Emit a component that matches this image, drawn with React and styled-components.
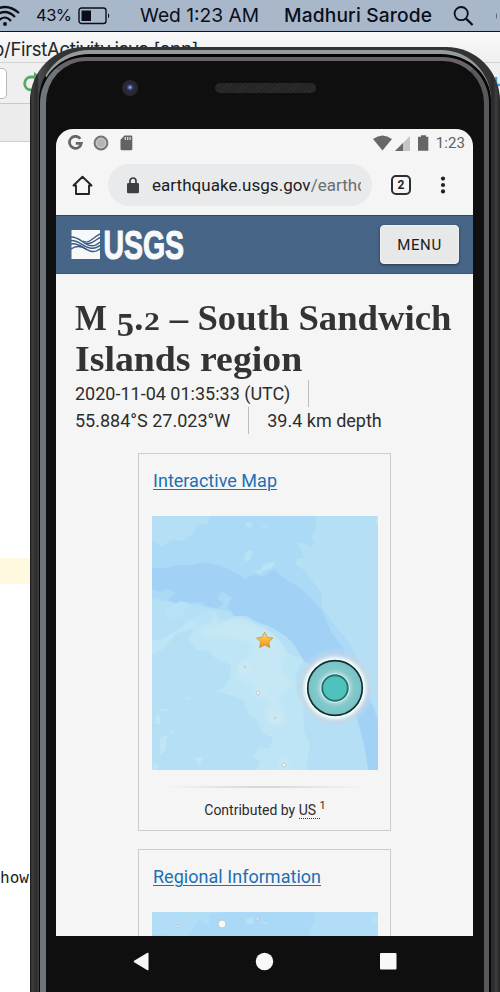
import React from "react";
import styled, { createGlobalStyle } from "styled-components";

const Global = createGlobalStyle`
  * { box-sizing: border-box; }
  html, body { margin: 0; padding: 0; overflow: hidden; }
  svg { display: block; flex: none; }
`;

/* ---------- desktop ---------- */
const Desktop = styled.div`
  position: relative;
  width: 500px;
  height: 992px;
  overflow: hidden;
  background: #fff;
  font-family: Roboto, sans-serif;
`;
const MenuBar = styled.header`
  display: flex;
  align-items: center;
  height: 32px;
  background: #a9b7cb;
  border-bottom: 1px solid #10131a;
  font-family: Inter, sans-serif;
  color: #0b0e18;
`;
const MenuText = styled.span`
  width: ${(p) => p.$w}px;
  margin-right: ${(p) => p.$gap}px;
  font-size: ${(p) => p.$size}px;
  font-weight: ${(p) => p.$weight || 400};
  letter-spacing: ${(p) => p.$track || 0}px;
  line-height: 31px;
  white-space: nowrap;
`;
const WifiSlot = styled.div`
  width: 20px;
  margin: -2px 16px 0 0;
`;
const BatterySlot = styled.div`
  width: 33px;
  margin-right: 29px;
`;
const TitleRow = styled.div`
  height: 31px;
  padding-top: 5px;
  background: linear-gradient(#f9f9f9, #efefef);
  border-bottom: 1px solid #d2d2d2;
  font: 18.5px/24px Inter, sans-serif;
  letter-spacing: -0.3px;
  color: #262626;
  white-space: nowrap;
  text-indent: -7px;
`;
const ToolRow = styled.div`
  display: flex;
  align-items: center;
  justify-content: space-between;
  height: 41px;
  background: #efefef;
  border-bottom: 1px solid #c9c9c9;
`;
const ToolGroup = styled.div`
  display: flex;
  align-items: center;
  gap: 15px;
`;
const ToolField = styled.div`
  width: 7px;
  height: 31px;
  background: #fff;
  border: 1px solid #b6b6b6;
  border-left: 0;
  border-radius: 0 5px 5px 0;
`;
const TabStrip = styled.div`
  height: 38px;
  background: #ececec;
  border-bottom: 1px solid #cfcfcf;
`;
const Editor = styled.div`
  padding-top: 416px;
  background: #fff;
`;
const ActiveLine = styled.div`
  height: 26px;
  margin-bottom: 281px;
  background: #fff9df;
`;
const CodeLine = styled.div`
  font: 16px/26px "DejaVu Sans Mono", monospace;
  color: #1c1c1c;
`;

/* ---------- phone body ---------- */
const Phone = styled.div`
  position: absolute;
  left: 30px;
  top: 47px;
  width: 470px;
  height: 960px;
  padding: 3px 9px 0 9px;
  border-radius: 54px 54px 0 0;
  background: linear-gradient(90deg, #151515 0, #3e3e3e 2px, #333 5px, #2a2a2a 7px, #4b4b4b 9px, #333 20px, #333 460px, #292929 463px, #3e3e3e 466px, #242424 470px);
`;
const Glint = styled.div`
  height: 100%;
  padding: 3px 2px 0 0;
  border-top: 4px solid #969c9c;
  border-left: 1px solid #080808;
  border-radius: 50px 50px 0 0;
  background: #050505;
`;
const Rim = styled.div`
  height: 100%;
  border-top: 4px solid #68636a;
  border-left: 6px solid #70757d;
  border-right: 5px solid #59585d;
  border-radius: 46px 46px 0 0;
  background: #0f0f0f;
  padding: 0 11px 0 10px;
`;
const Forehead = styled.div`
  display: flex;
  align-items: center;
  height: 68px;
  padding: 0 0 14px 66px;
`;
const Camera = styled.div`
  width: 16px;
  height: 16px;
  border: 4px solid #29292b;
  border-radius: 50%;
  background: radial-gradient(circle at 50% 42%, #93a0d8 0 12%, #3b4882 35%, #1d2240 75%);
`;
const Speaker = styled.div`
  width: 101px;
  height: 10px;
  margin-left: 77px;
  border-radius: 5px;
  background: repeating-linear-gradient(135deg, #2b2d2c 0 1px, #242625 1px 3px);
`;
const Screen = styled.main`
  width: 417px;
  height: 807px;
  overflow: hidden;
  border-radius: 17px 17px 0 0;
  background: #f5f5f5;
`;
const NavBar = styled.nav`
  display: flex;
  align-items: center;
  height: 50px;
  padding-left: 77px;
`;
const NavSlot = styled.div`
  width: ${(p) => p.$w}px;
`;

/* ---------- browser ---------- */
const StatusBar = styled.div`
  display: flex;
  align-items: center;
  justify-content: space-between;
  height: 28px;
  padding: 0 8px 0 12px;
`;
const StatusGroup = styled.div`
  display: flex;
  align-items: center;
  gap: ${(p) => p.$gap}px;
  color: #606060;
`;
const Clock = styled.span`
  margin-left: 0;
  font-size: 15px;
  line-height: 20px;
  letter-spacing: 0.1px;
`;
const AddressRow = styled.div`
  display: flex;
  align-items: center;
  height: 58px;
  padding: 0 0 2px 16px;
`;
const Pill = styled.div`
  display: flex;
  align-items: center;
  width: 264px;
  height: 42px;
  margin: 0 19px 0 15px;
  padding: 0 10px 0 19px;
  border-radius: 21px;
  background: #e8eaeb;
`;
const Url = styled.span`
  width: 209px;
  margin-left: 13px;
  overflow: hidden;
  white-space: nowrap;
  font-size: 17px;
  line-height: 24px;
  letter-spacing: 0.04px;
  color: #202124;
`;
const UrlPath = styled.span`
  color: #6b6e71;
`;
const TabCount = styled.div`
  display: grid;
  place-items: center;
  width: 20px;
  height: 20px;
  margin-right: 29px;
  border: 2px solid #2a2d34;
  border-radius: 5px;
  font-size: 12px;
  font-weight: 700;
  line-height: 14px;
  color: #202124;
`;
const SiteHeader = styled.div`
  display: flex;
  align-items: center;
  justify-content: space-between;
  height: 59px;
  padding: 0 14px 0 15px;
  border-top: 1px solid #17516b;
  border-bottom: 1px solid #2f5a85;
  background: #476586;
`;
const MenuButton = styled.button`
  width: 79px;
  height: 39px;
  padding: 0;
  border: 1px solid #f1f1f1;
  border-radius: 4px;
  background: #e8e8e8;
  box-shadow: 0 1px 3px rgba(0, 0, 0, 0.45);
  font: 400 15px/36px Roboto, sans-serif;
  letter-spacing: 0.6px;
  color: #1c1c1c;
`;

/* ---------- article ---------- */
const Article = styled.article`
  padding: 24px 0 0 19px;
`;
const Title = styled.h1`
  margin: 0;
  font: 700 36px/41px "Liberation Serif", serif;
  color: #333;
`;
const TitleLine = styled.span`
  display: block;
  width: max-content;
  height: 41px;
  white-space: nowrap;
  transform: scaleX(${(p) => p.$fit});
  transform-origin: 0 50%;
`;
const Capital = styled.span`
  display: inline-block;
  margin-right: -2px;
  transform: scaleX(0.92);
  transform-origin: 0 50%;
`;
const OldFigure = styled.span`
  display: inline-block;
  font-size: ${(p) => p.$size}px;
  line-height: 20px;
  transform: translateY(${(p) => p.$drop || 0}px) scaleX(${(p) => p.$stretch || 1});
  margin: 0 ${(p) => p.$side || 0}px;
`;
const FactLine = styled.div`
  display: flex;
  align-items: center;
  height: 27px;
  font-size: 18px;
  line-height: 27px;
  white-space: nowrap;
  color: #2d2d2d;
`;
const Divider = styled.i`
  width: 1px;
  height: 27px;
  margin: 0 18px;
  background: #bdbdbd;
`;
const Card = styled.section`
  width: 253px;
  height: 378px;
  margin: ${(p) => p.$top}px 0 0 63px;
  padding: 13px 12px 0 13px;
  border: 1px solid #cdcdcd;
`;
const CardLink = styled.a`
  display: block;
  width: max-content;
  height: 49px;
  padding-left: 1px;
  font-size: 18px;
  line-height: 27px;
  letter-spacing: ${(p) => p.$track}px;
  color: #1c70b4;
  text-decoration: underline;
  text-decoration-thickness: 1px;
  text-underline-offset: 2px;
`;
const Rule = styled.div`
  height: 2px;
  margin: 16px 13px 0;
  background: linear-gradient(90deg, transparent, #d6d6d6 50%, transparent);
`;
const Credit = styled.p`
  margin: 9px 0 0;
  text-align: center;
  font-size: 14px;
  line-height: 26px;
  color: #2c2c2c;
`;
const Abbr = styled.abbr`
  text-decoration: none;
  border-bottom: 1px dotted #333;
`;
const Sup = styled.sup`
  font-size: 11px;
  line-height: 0;
  vertical-align: 6px;
`;

const MenuWifi = () => (
  <svg width="20" height="22" viewBox="0 0 20 22" fill="none" stroke="#0b0e18" strokeWidth="2.2">
    <path d="M-9 9Q5-3 19 9M-6 13Q5 3 15 13M-2 17Q5 10 11 17" />
    <circle cx="5" cy="20" r="2" fill="#0b0e18" stroke="none" />
  </svg>
);

const MenuBattery = () => (
  <svg width="33" height="18" viewBox="0 0 33 18">
    <rect x="1" y="1" width="27" height="15.5" rx="2.5" fill="none" stroke="#0b0e18" strokeWidth="1.4" />
    <rect x="3.5" y="3.5" width="9.5" height="10.5" fill="#0b0e18" />
    <path d="M30 6q2.5 2.8 0 5.6z" fill="#0b0e18" />
  </svg>
);

const SearchGlyph = () => (
  <svg width="22" height="22" viewBox="0 0 22 22" fill="none" stroke="#0b0e18">
    <circle cx="8.2" cy="8.6" r="6.6" strokeWidth="1.8" />
    <path d="M13 13.600L19.600 20" strokeWidth="2.2" />
  </svg>
);

const Brand = () => (
  <svg width="115" height="32" viewBox="0 0 115 32">
    <rect x="0.5" y="1" width="28.5" height="29" fill="#f7f8f9" />
    <g fill="none" stroke="#3a5d84" strokeWidth="1.4">
      <path d="M0 8C7 8 10 12 15 15S24 18 29 13" />
      <path d="M0 11.500C8 11 12 18 19 19S26 18 29 16.500" />
      <path d="M0 15C8 13 12 20 19 22S26 21 29 20" />
      <path d="M12 12C18 16 22 8 29 5" />
      <path d="M15 14.500C21 16 24 11 29 8.500" />
      <path d="M0 20C6 16 11 17 16 20.500" />
    </g>
    <text x="32.5" y="29.6" textLength="80.5" lengthAdjust="spacingAndGlyphs" fontFamily="'Liberation Sans Narrow','Liberation Sans',sans-serif" fontWeight="700" fontSize="40" fill="#f8f9fa" stroke="#f8f9fa" strokeWidth="1.2">USGS</text>
  </svg>
);

const SeaMap = () => (
  <svg width="226" height="254" viewBox="0 0 226 254">
    <defs>
      <radialGradient id="halo"><stop offset=".72" stopColor="#f8ffff" stopOpacity=".95" /><stop offset=".84" stopColor="#c9d6e2" stopOpacity=".7" /><stop offset="1" stopColor="#c5d9ea" stopOpacity="0" /></radialGradient>
      <radialGradient id="lens"><stop offset=".5" stopColor="#b5dfe2" /><stop offset=".68" stopColor="#84c9cc" /><stop offset="1" stopColor="#75c2c5" /></radialGradient>
      <linearGradient id="gold" x2="0" y2="1"><stop stopColor="#ffe36b" /><stop offset="1" stopColor="#f68a12" /></linearGradient>
      <filter id="soften"><feGaussianBlur stdDeviation=".6" /></filter>
      <filter id="mist"><feGaussianBlur stdDeviation="2" /></filter>
    </defs>
    <rect width="226" height="254" fill="#b4dff5" />
    <g filter="url(#soften)">
      <path fill="#abdaf6" d="M58-3L56 8 45 9 42 17 32 25 20 24 10 30 0 25-3 25V82L20 86 50 90 95 99 135 119 160 149 190 165 211 220 218 257H229V207L220 187 211 155 197 127 181 107 170 91V78L158 62 153 55 143 48 145 43 152 42 149 35 145 27 151 27 159 31 162 27 159 20 164 14V-3z" />
      <path fill="#a1d2f6" d="M-3 52H15L26 49 40 49 55 46 75 52 86 58 93 63 101 59 111 60 122 53 132 62 148 72 161 84 170 95 180 117 191 132 200 151 213 159 217 181 226 202 229 210V257H217L212 229 205 201 199 175 184 163 167 154 152 145 141 127 132 119 117 110 102 105 95 100 82 100 75 90 80 82 70 75 65 82 72 88 65 92 56 91 48 86 24 88 16 83 24 77 15 73 9 76 0 73-3 73z" />
      <path fill="#bee5f5" d="M-3 126L10 123 27 113 36 105 48 99 62 94 68 105 89 101 102 108 115 114 128 125 137 138 151 143 144 158 145 177 151 185 152 216 158 229 154 254H104L109 246 101 240 107 232 118 232 121 222 110 217 105 204 96 198 92 184 75 178 64 176 72 171 78 162 79 149 63 142 57 135 44 134 37 123 42 112 23 118 13 131 4 137-3 140z" />
      <path filter="url(#mist)" fill="#cbe9f5" opacity=".65" d="M68 109Q77 100 101 108T128 130Q137 135 131 147T141 164Q137 177 132 178T128 190Q136 201 132 210L120 211 112 196 118 187 98 169 84 160 87 146 101 138 100 126 74 122 56 121 49 116 58 109z" />
      <path fill="#b8e2f5" d="M93 38q5-6 8-1l-4 8q-7 1-4-7zM94 7q4-2 7 1l-2 3q-4 1-5-1zM108 10l8-1v3zM111 48l13-3-4 7-12 4zM103 55l9-2-4 5zM144 46l8 2-4 3zM15 92l13-7 9 2-7 14-14 4-3-7zM41 102l12-8 9 1-3 12-15 3z" />
      <path fill="#c0e5f5" d="M8 222l7-4-1 15-6 6zM4 199l4 1v8H4zM18 214h4v4zM42 241l9 1-4 7zM34 181l4 1-4 2zM8 193h7v2H8zM224 3l3-1v8l-3-2zM1 247l7 3-3 4H0z" />
      <path fill="#abd9f6" d="M181 109L197 127 211 155 220 187 229 207V215L215 177 205 155 193 138z" opacity=".6" />
      <g fill="#d0eaf5" opacity=".7" filter="url(#mist)"><ellipse cx="93" cy="151" rx="5" ry="6" /><circle cx="108" cy="177" r="5" /><circle cx="122" cy="202" r="6" /><circle cx="132" cy="247" r="5" /></g>
    </g>
    <g fill="#f5f4ef" stroke="#aab6b9" strokeWidth=".6"><circle cx="93" cy="151" r="1" /><circle cx="106" cy="177" r="1.8" /><circle cx="123" cy="202" r="1" /><circle cx="132" cy="249" r="2" /></g>
    <path d="M112.7 116.2l2.5 5 5.6.9-4 3.9.9 5.6-5-2.6-5 2.6.9-5.6-4-3.9 5.6-.9z" fill="url(#gold)" stroke="#c39246" strokeWidth=".8" />
    <circle cx="183" cy="172" r="40" fill="url(#halo)" />
    <circle cx="183" cy="172" r="29.300" fill="#fff" />
    <circle cx="183" cy="172" r="27.3" fill="url(#lens)" stroke="#102f2f" strokeWidth="1.7" />
    <circle cx="183" cy="172" r="14.6" fill="#e9f6f6" />
    <circle cx="183" cy="172" r="12.8" fill="#50c2bc" stroke="#286f72" strokeWidth="1.9" />
  </svg>
);

const RegionMap = () => (
  <svg width="226" height="254" viewBox="0 0 226 254">
    <rect width="226" height="254" fill="#b1def6" />
    <path fill="#a9d9f6" d="M0 23L35 24 48 8 57 14V2L75 0H164L163 9 157 20 161 30V254H0z" />
    <path fill="#b8e1f5" d="M94 7l7-2v7h-7zM108 9l9 2-3 2zM220 5l6-2v9l-5-2z" />
    <g fill="#f7f7f4" stroke="#aebdc2" strokeWidth=".7"><circle cx="70" cy="12" r="4" /><circle cx="25" cy="14.5" r="1.3" /><circle cx="105.500" cy="7" r="1.3" /></g>
  </svg>
);

export default function App() {
  return (
    <Desktop>
      <Global />
      <MenuBar>
        <WifiSlot><MenuWifi /></WifiSlot>
        <MenuText $size={16.5} $w={35} $gap={7} $track={-0.5}>43%</MenuText>
        <BatterySlot><MenuBattery /></BatterySlot>
        <MenuText $size={19.2} $w={120} $gap={24}>Wed 1:23 AM</MenuText>
        <MenuText $size={19.2} $w={149} $gap={20} $weight={500} $track={0.15}>Madhuri Sarode</MenuText>
        <SearchGlyph />
        <svg width="22" height="22" viewBox="0 0 22 22"><circle cx="32" cy="11" r="9.500" fill="none" stroke="#0b0e18" strokeWidth="2" /></svg>
      </MenuBar>
      <TitleRow>b/FirstActivity.java [app]</TitleRow>
      <ToolRow>
        <ToolGroup>
          <ToolField />
          <svg width="20" height="22" viewBox="0 0 20 22"><path d="M13 5H9a6.500 6.500 0 1 0 6.500 8" fill="none" stroke="#58a968" strokeWidth="2.800" /><path d="M12 0l7 5-7 5z" fill="#58a968" /></svg>
        </ToolGroup>
        <svg width="6" height="16" viewBox="0 0 6 16"><path d="M2 2v11M2 10h4" stroke="#38a6dd" strokeWidth="2.500" /></svg>
      </ToolRow>
      <TabStrip />
      <Editor>
        <ActiveLine />
        <CodeLine>how</CodeLine>
      </Editor>

      <Phone>
        <Glint>
          <Rim>
            <Forehead>
              <Camera />
              <Speaker />
            </Forehead>
            <Screen>
              <StatusBar>
                <StatusGroup $gap={10}>
                  <svg width="15" height="16" viewBox="0 0 15 16" fill="none" stroke="#666" strokeWidth="2.700"><path d="M12.300 3.700A6 6 0 1 0 13.400 8.300H7.800" /></svg>
                  <svg width="16" height="16" viewBox="0 0 16 16"><circle cx="8" cy="8" r="6.400" fill="#c6c6c6" stroke="#757575" strokeWidth="2" /><circle cx="8" cy="8" r="3.800" fill="#b3b3b3" /></svg>
                  <svg width="15" height="16" viewBox="-1 0 15 16"><path d="M4.500.5H11q1.300 0 1.300 1.300V14q0 1.300-1.300 1.300H1.800Q.5 15.300.5 14V4.800z" fill="#626262" /><path d="M5.300 2v3M7.700 2v3M10.100 2v3" stroke="#e7e7e7" strokeWidth="1.200" /></svg>
                </StatusGroup>
                <StatusGroup $gap={3}>
                  <svg width="19" height="16" viewBox="0 0 19 16"><path d="M0 4Q9.500-3 19 4L9.500 15.500z" fill="#686868" /></svg>
                  <svg width="15" height="15" viewBox="0 0 15 15"><path d="M0 15L15 0V15z" fill="#c5c5c5" /><path d="M0 15L8 7V15z" fill="#686868" /></svg>
                  <svg width="20" height="16" viewBox="0 0 20 16"><path d="M8 .3h5v1.500h2.300V15.700H5V1.800H8z" fill="#656565" /></svg>
                  <Clock>1:23</Clock>
                </StatusGroup>
              </StatusBar>
              <AddressRow>
                <svg width="21" height="21" viewBox="0 0 21 21" fill="none" stroke="#202329" strokeWidth="1.900" strokeLinejoin="round"><path d="M1.500 10.500L10.500 1.800l9 8.700H17v8.500H4v-8.500z" /></svg>
                <Pill>
                  <svg width="12" height="17" viewBox="0 0 12 17"><rect y="6" width="12" height="10.200" rx="1.200" fill="#3c4043" /><path d="M3 7V4a3 3 0 0 1 6 0v3" fill="none" stroke="#3c4043" strokeWidth="1.700" /></svg>
                  <Url>earthquake.usgs.gov<UrlPath>/earthquakes</UrlPath></Url>
                </Pill>
                <TabCount>2</TabCount>
                <svg width="6" height="20" viewBox="0 0 6 20" fill="#202329"><circle cx="3" cy="3.600" r="2.100" /><circle cx="3" cy="10" r="2.100" /><circle cx="3" cy="16.400" r="2.100" /></svg>
              </AddressRow>
              <SiteHeader>
                <Brand />
                <MenuButton>MENU</MenuButton>
              </SiteHeader>
              <Article>
                <Title>
                  <TitleLine $fit={1.02}><Capital>M</Capital> <OldFigure $size={34} $drop={6}>5</OldFigure>.<OldFigure $size={26} $stretch={1.2} $side={2}>2</OldFigure> – South Sandwich</TitleLine>
                  <TitleLine $fit={1.05}>Islands region</TitleLine>
                </Title>
                <FactLine>2020-11-04 01:35:33 (UTC)<Divider /></FactLine>
                <FactLine>55.884°S 27.023°W<Divider />39.4 km depth</FactLine>
                <Card $top={19}>
                  <CardLink $track={0.02}>Interactive Map</CardLink>
                  <SeaMap />
                  <Rule />
                  <Credit>Contributed by <Abbr>US </Abbr><Sup>1</Sup></Credit>
                </Card>
                <Card $top={18}>
                  <CardLink $track={0.03}>Regional Information</CardLink>
                  <RegionMap />
                </Card>
              </Article>
            </Screen>
            <NavBar>
              <NavSlot $w={122}><svg width="17" height="19" viewBox="0 0 17 19"><path d="M1.500 9.500L14.800 1.500v16z" fill="#f8f8f8" stroke="#f8f8f8" strokeWidth="1.500" strokeLinejoin="round" /></svg></NavSlot>
              <NavSlot $w={125}><svg width="19" height="19" viewBox="0 0 19 19"><circle cx="9.500" cy="9.500" r="8.700" fill="#f8f8f8" /></svg></NavSlot>
              <NavSlot $w={20}><svg width="17" height="17" viewBox="0 0 17 17"><rect width="16.500" height="16.500" rx="1" fill="#f8f8f8" /></svg></NavSlot>
            </NavBar>
          </Rim>
        </Glint>
      </Phone>
    </Desktop>
  );
}
